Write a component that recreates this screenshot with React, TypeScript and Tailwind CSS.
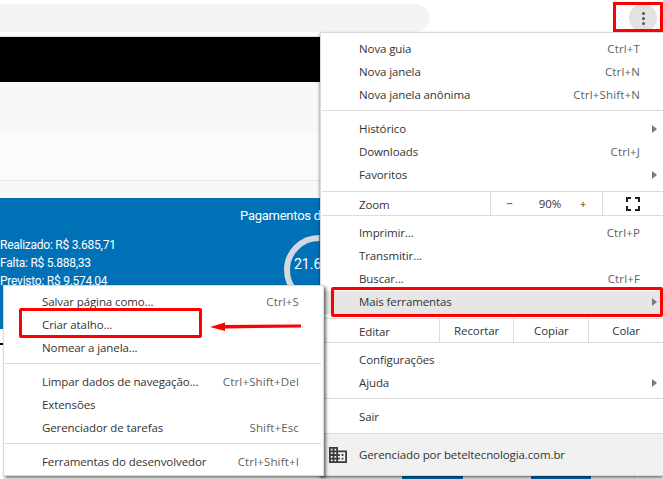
const font = { fontFamily: '"Open Sans", sans-serif' };
const panelFont = { fontFamily: 'Roboto, sans-serif' };

const Caret = () => (
  <svg width="5" height="8" viewBox="0 0 5 8" className="shrink-0">
    <path d="M0 0L5 4L0 8Z" fill="#7a7a7a" />
  </svg>
);

const Row = ({ label, hint, sub, hot }: { label: string; hint?: string; sub?: boolean; hot?: boolean }) => (
  <div className={`flex h-[23px] items-center justify-between pb-[1px] pl-[38px] ${sub ? 'pr-[6px]' : 'pr-[23px]'} ${hot ? 'bg-[#e6e6e6]' : ''}`}>
    <span>{label}</span>
    {hint && <span className="tracking-[0.15px] text-[#5f5f5f]">{hint}</span>}
    {sub && <Caret />}
  </div>
);

const Sep = ({ className }: { className: string }) => <div className={`h-px bg-[#dcdcdc] ${className}`} />;

const MainMenu = () => (
  <div className="absolute right-0 top-[32px] flex h-[444px] w-[343px] flex-col border-l border-t border-b border-[#d9d9d9] bg-white pt-[5px] text-[11.5px] tracking-[-0.1px] text-[#333] shadow-[0_2px_3px_rgba(0,0,0,0.55)]">
    <Row label="Nova guia" hint="Ctrl+T" />
    <Row label="Nova janela" hint="Ctrl+N" />
    <Row label="Nova janela anônima" hint="Ctrl+Shift+N" />
    <Sep className="ml-px mb-[7px] mt-[3px]" />
    <Row label="Histórico" sub />
    <Row label="Downloads" hint="Ctrl+J" />
    <Row label="Favoritos" sub />
    <Sep className="ml-px mt-[4px]" />
    <div className="flex h-[23px] items-center">
      <span className="w-[169px] pl-[38px] pt-[3px]">Zoom</span>
      <div className="flex h-full w-[112px] items-center border-l border-[#dcdcdc] pt-[1px]">
        <span className="w-[37px] text-center">−</span>
        <span className="w-[44px] text-center">90%</span>
        <span className="w-[22px] text-center">+</span>
      </div>
      <div className="flex h-full flex-1 items-center border-l border-[#dcdcdc] pl-[23px]">
        <svg width="14" height="14" viewBox="0 0 14 14" fill="none" stroke="#222" strokeWidth="2">
          <path d="M1 5V1H5M9 1H13V5M13 9V13H9M5 13H1V9" />
        </svg>
      </div>
    </div>
    <Sep className="ml-px mb-[6px]" />
    <Row label="Imprimir..." hint="Ctrl+P" />
    <Row label="Transmitir..." />
    <Row label="Buscar..." hint="Ctrl+F" />
    <Row label="Mais ferramentas" sub hot />
    <Sep className="ml-px mt-[4px]" />
    <div className="flex h-[23px] items-center">
      <span className="w-[118px] pl-[38px] pt-[3px]">Editar</span>
      {['Recortar', 'Copiar', 'Colar'].map(t => (
        <span key={t} className="flex h-full w-[75px] items-center justify-center border-l border-[#dcdcdc] pt-[1px]">{t}</span>
      ))}
    </div>
    <Sep className="ml-px mb-[6px]" />
    <Row label="Configurações" />
    <Row label="Ajuda" sub />
    <Sep className="ml-px mb-[7px] mt-[3px]" />
    <Row label="Sair" />
    <Sep className="ml-px mt-[4px]" />
    <div className="flex flex-1 items-center gap-[12px] bg-[#f1f1f1] pl-[8px]">
      <svg width="18" height="18" viewBox="2 3 20 18" fill="#3c3c3c">
        <path d="M12 7V3H2v18h20V7H12zM6 19H4v-2h2v2zm0-4H4v-2h2v2zm0-4H4V9h2v2zm0-4H4V5h2v2zm4 12H8v-2h2v2zm0-4H8v-2h2v2zm0-4H8V9h2v2zm0-4H8V5h2v2zm10 12h-8v-2h2v-2h-2v-2h2v-2h-2V9h8v10zm-2-8h-2v2h2v-2zm0 4h-2v2h2v-2z" />
      </svg>
      <span>Gerenciado por beteltecnologia.com.br</span>
    </div>
  </div>
);

const SubMenu = () => (
  <div className="absolute left-[3px] top-[285px] h-[191px] w-[321px] border border-[#d9d9d9] bg-white pr-[1px] pt-[5px] text-[11.5px] tracking-[-0.1px] text-[#333] shadow-[2px_2px_3px_rgba(0,0,0,0.55)]">
    <Row label="Salvar página como..." hint="Ctrl+S" />
    <Row label="Criar atalho..." />
    <Row label="Nomear a janela..." />
    <Sep className="mx-px mb-[7px] mt-[3px]" />
    <Row label="Limpar dados de navegação..." hint="Ctrl+Shift+Del" />
    <Row label="Extensões" />
    <Row label="Gerenciador de tarefas" hint="Shift+Esc" />
    <Sep className="mx-px mb-[7px] mt-[3px]" />
    <Row label="Ferramentas do desenvolvedor" hint="Ctrl+Shift+I" />
  </div>
);

const Ring = () => (
  <div className="relative h-[70px] w-[70px] shrink-0">
    <svg width="70" height="70" viewBox="0 0 70 70" fill="none" strokeWidth="6">
      <circle cx="35" cy="35" r="32" stroke="#d5d9de" />
      <path d="M35 3A32 32 0 0 1 67 35" stroke="#5cb41e" />
    </svg>
    <span className="absolute left-[10px] top-[19px] text-[14px] tracking-normal text-white">21.6</span>
  </div>
);

export default function App() {
  return (
    <div className="relative flex h-[479px] w-[663px] flex-col overflow-hidden bg-white" style={font}>
      <div className="flex h-[37px] shrink-0 items-center border-b border-[#dedede] pr-[6px]">
        <div className="h-[28px] w-[429px] rounded-r-full bg-[#f1f3f4]" />
        <div className="ml-auto flex h-[28px] w-[28px] flex-col items-center justify-center gap-[2px] rounded-full bg-[#e2e2e2]">
          <i className="h-[3px] w-[3px] rounded-full bg-[#555]" />
          <i className="h-[3px] w-[3px] rounded-full bg-[#555]" />
          <i className="h-[3px] w-[3px] rounded-full bg-[#555]" />
        </div>
      </div>
      <div className="h-[45px] shrink-0 bg-black" />
      <div className="h-[52px] shrink-0 bg-[#f8f8f8]" />
      <div className="h-[47px] shrink-0 border-b border-[#e6e6e6] bg-[#fbfbfb]" />
      <div className="h-[17px] shrink-0 bg-[#f8f8f8]" />
      <div className="h-[131px] shrink-0 bg-[#0071b7] text-[12px] tracking-[-0.25px] text-white" style={panelFont}>
        <div className="pl-[240px] pt-[9px] text-[13px] leading-[18px]">Pagamentos do mês</div>
        <div className="mt-[10px] flex">
          <div className="flex w-[284px] flex-col pt-[1px] leading-[18px]">
            <span>Realizado: R$ 3.685,71</span>
            <span>Falta: R$ 5.888,33</span>
            <span>Previsto: R$ 9.574,04</span>
          </div>
          <Ring />
        </div>
      </div>
      <div className="mt-[14px] h-[2px] w-[3px] bg-black" />
      <div className="mt-auto flex h-[4px] shrink-0 pl-[402px]">
        <div className="w-[61px] bg-[#0071b7]" />
        <div className="ml-[68px] w-[60px] bg-[#0071b7]" />
        <div className="ml-[43px] w-px bg-[#dcdcdc]" />
      </div>

      <MainMenu />
      <SubMenu />

      {/* marcações vermelhas */}
      <div className="absolute left-[613px] top-[2px] h-[30px] w-[50px] border-[3px] border-[#f00]" />
      <div className="absolute left-[331px] top-[287px] h-[30px] w-[332px] rounded-[2px] border-[3px] border-[#f00]" />
      <div className="absolute left-[19px] top-[308px] h-[30px] w-[183px] rounded-[2px] border-[3px] border-[#f00]" />
      <svg className="absolute left-[205px] top-[318px]" width="100" height="16" viewBox="205 318 100 16">
        <path d="M210 327L225 322.5V325L301 324.5V327.5L225 328.5V331Z" fill="#f00" />
      </svg>
    </div>
  );
}
